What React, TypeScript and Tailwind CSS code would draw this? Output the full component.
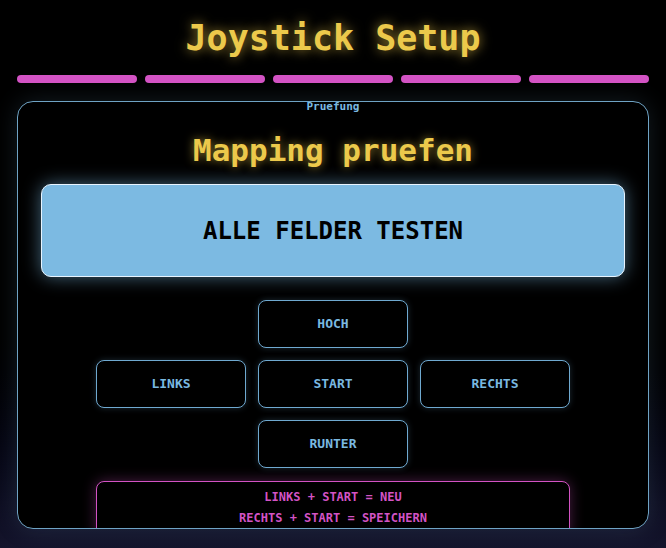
import React from "react";

const dirs: (string | null)[] = [null, "HOCH", null, "LINKS", "START", "RECHTS", null, "RUNTER", null];

export default function App() {
  return (
    <div className="min-h-[548px] w-[666px] bg-gradient-to-b from-black via-black to-[#14142c] px-[17px] pt-4 font-['DejaVu_Sans_Mono',monospace]">
      <h1 className="text-center text-[35px] leading-[44px] font-bold text-[#ecc94b] [text-shadow:0_0_12px_rgba(236,201,75,0.7)]">
        Joystick Setup
      </h1>

      <div className="mt-[15px] grid grid-cols-5 gap-2">
        {[0, 1, 2, 3, 4].map((i) => (
          <div key={i} className="h-2 rounded-full bg-[#d353c4]" />
        ))}
      </div>

      <div className="mt-[18px] h-[428px] overflow-hidden rounded-2xl border border-[#6fa3c4] bg-black px-[23px] shadow-[0_0_24px_rgba(111,163,196,0.18)]">
        <div className="text-center text-[11px] leading-[10px] font-bold text-[#7ab9e0]">Pruefung</div>

        <h2 className="mt-5 text-center text-[31px] leading-[36px] font-bold text-[#ecc94b] [text-shadow:0_0_10px_rgba(236,201,75,0.6)]">
          Mapping pruefen
        </h2>

        <button className="mt-4 flex h-[93px] w-full items-center justify-center rounded-[10px] border border-[#e8f4ff] bg-[#7cbae2] text-[24px] font-bold text-black shadow-[0_0_18px_rgba(124,186,226,0.55)]">
          ALLE FELDER TESTEN
        </button>

        <div className="mx-auto mt-[23px] grid w-[474px] grid-cols-3 gap-3">
          {dirs.map((d, i) =>
            d ? (
              <button
                key={i}
                className="h-12 rounded-lg border border-[#6fa9d0] bg-black text-[13px] font-bold text-[#7ab9e0] shadow-[0_0_6px_rgba(111,169,208,0.25)]"
              >
                {d}
              </button>
            ) : (
              <div key={i} />
            )
          )}
        </div>

        <div className="mx-auto mt-[13px] w-[474px] rounded-lg border border-[#d353c4] bg-black pt-[5px] pb-2 text-center text-[12px] leading-[21px] font-bold text-[#d353c4] shadow-[0_0_14px_rgba(211,83,196,0.35)]">
          <div>LINKS + START = NEU</div>
          <div>RECHTS + START = SPEICHERN</div>
        </div>
      </div>
    </div>
  );
}
